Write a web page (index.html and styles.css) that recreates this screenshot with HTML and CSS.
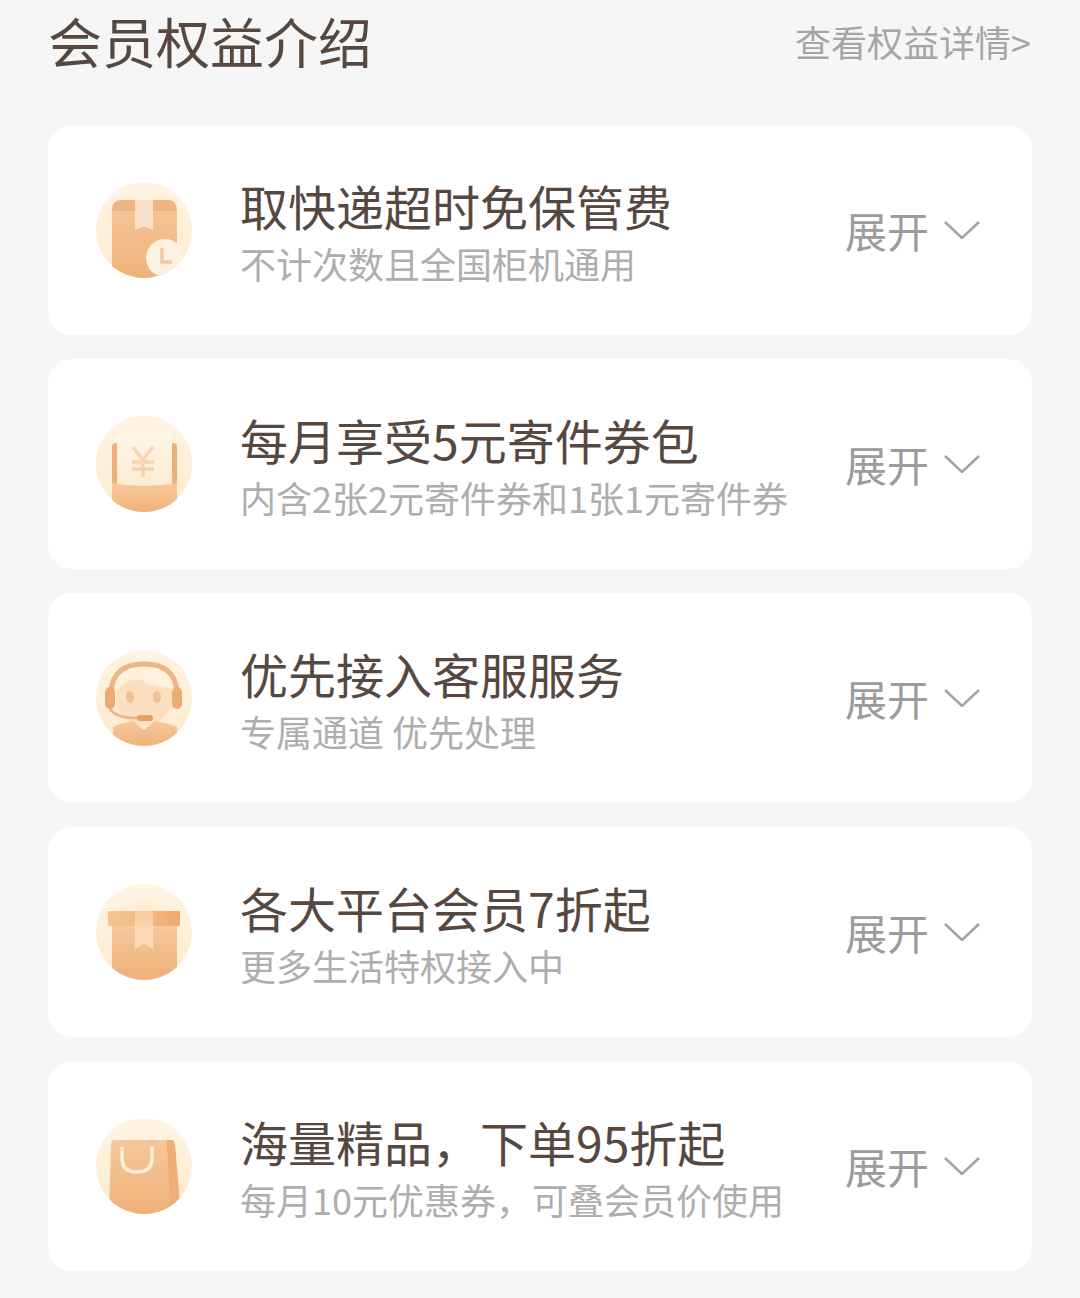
FILE: index.html
```html
<!DOCTYPE html>
<html lang="zh-CN">
<head>
  <meta charset="UTF-8">
  <meta name="viewport" content="width=device-width, initial-scale=1.0">
  <title>会员权益介绍</title>
  <link rel="stylesheet" href="styles.css">
</head>
<body>

<header class="page-head">
  <h1>会员权益介绍</h1>
  <a class="more">查看权益详情&gt;</a>
</header>

<svg class="defs" width="0" height="0">
  <defs>
    <linearGradient id="disc" x1="0" y1="0" x2="0" y2="1">
      <stop offset="0" stop-color="#fff4e3"/>
      <stop offset="1" stop-color="#fdeacd"/>
    </linearGradient>
    <linearGradient id="box" x1="0" y1="0" x2="0" y2="1">
      <stop offset="0" stop-color="#f6c89b"/>
      <stop offset="1" stop-color="#efb078"/>
    </linearGradient>
    <linearGradient id="band" x1="0" y1="0" x2="1" y2="0">
      <stop offset="0" stop-color="#f6c591"/>
      <stop offset="1" stop-color="#eeab6e"/>
    </linearGradient>
    <linearGradient id="sheet" x1="0" y1="0" x2="0" y2="1">
      <stop offset="0" stop-color="#fff6e9"/>
      <stop offset="1" stop-color="#fcebd2"/>
    </linearGradient>
    <linearGradient id="pale" x1="0" y1="0" x2="0" y2="1">
      <stop offset="0" stop-color="#fde3c4" stop-opacity=".35"/>
      <stop offset="1" stop-color="#fcdcb9"/>
    </linearGradient>
    <clipPath id="round"><circle cx="48" cy="48" r="48"/></clipPath>
  </defs>
</svg>

<main class="list">

  <!-- 取快递 -->
  <section class="card">
    <svg class="badge" viewBox="0 0 96 96">
      <circle cx="48" cy="48" r="48" fill="url(#disc)"/>
      <g clip-path="url(#round)">
        <path d="M16 30 Q16 18 26 18 H71 Q81 18 81 30 V100 H16 Z" fill="url(#box)"/>
        <path d="M16 29 Q16 18 26 18 H71 Q81 18 81 29 Z" fill="#f1b480"/>
        <path d="M39 18 H57 V48 L48 44 L39 48 Z" fill="#fbe3c9"/>
        <circle cx="69" cy="76" r="19" fill="#fdf1e0"/>
        <path d="M66 66 V80 H76" fill="none" stroke="#f3c9a0" stroke-width="3.5"/>
      </g>
    </svg>
    <div class="info">
      <h2>取快递超时免保管费</h2>
      <p>不计次数且全国柜机通用</p>
    </div>
    <div class="toggle">
      <span>展开</span>
      <svg class="chevron" viewBox="0 0 36 18"><path d="M1 1 L18 17 L35 1"/></svg>
    </div>
  </section>

  <!-- 寄件券 -->
  <section class="card">
    <svg class="badge" viewBox="0 0 96 96">
      <circle cx="48" cy="48" r="48" fill="url(#disc)"/>
      <g clip-path="url(#round)">
        <path d="M16 30 Q16 27 21 27 V70 H16 Z M81 30 Q81 27 76 27 V70 H81 Z" fill="#edb07a"/>
        <rect x="21" y="17" width="55" height="54" fill="url(#sheet)"/>
        <path d="M16 67 Q48 73 81 67 V100 H16 Z" fill="url(#box)"/>
        <path d="M37 31 L47 44 L57 31 M36 46 H58 M36 53 H58 M47 44 V61" fill="none" stroke="#f8d3ab" stroke-width="3.5"/>
      </g>
    </svg>
    <div class="info">
      <h2>每月享受5元寄件券包</h2>
      <p>内含2张2元寄件券和1张1元寄件券</p>
    </div>
    <div class="toggle">
      <span>展开</span>
      <svg class="chevron" viewBox="0 0 36 18"><path d="M1 1 L18 17 L35 1"/></svg>
    </div>
  </section>

  <!-- 客服 -->
  <section class="card">
    <svg class="badge" viewBox="0 0 96 96">
      <circle cx="48" cy="48" r="48" fill="url(#disc)"/>
      <g clip-path="url(#round)">
        <path d="M20 46 Q24 28 46 30 Q52 36 76 38 V52 Q70 74 48 76 Q26 74 20 52 Z" fill="#fcdfc0"/>
        <path d="M17 77 Q26 73 37 71 L48 80 L59 71 Q70 73 81 77 L81 100 H17 Z" fill="url(#box)"/>
        <path d="M15 42 Q17 14 48 14 Q79 14 81 42" fill="none" stroke="#efb482" stroke-width="5"/>
        <rect x="9" y="37" width="10" height="22" rx="5" fill="#edab72"/>
        <rect x="76" y="37" width="10" height="22" rx="5" fill="#edab72"/>
        <path d="M14 58 Q18 68 42 68" fill="none" stroke="#efb482" stroke-width="3"/>
        <rect x="41" y="65" width="16" height="6" rx="3" fill="#ea9f62"/>
        <ellipse cx="34" cy="47" rx="4" ry="6" fill="#f3c092"/>
        <ellipse cx="61" cy="47" rx="4" ry="6" fill="#f3c092"/>
      </g>
    </svg>
    <div class="info">
      <h2>优先接入客服服务</h2>
      <p>专属通道 优先处理</p>
    </div>
    <div class="toggle">
      <span>展开</span>
      <svg class="chevron" viewBox="0 0 36 18"><path d="M1 1 L18 17 L35 1"/></svg>
    </div>
  </section>

  <!-- 平台会员 -->
  <section class="card">
    <svg class="badge" viewBox="0 0 96 96">
      <circle cx="48" cy="48" r="48" fill="url(#disc)"/>
      <g clip-path="url(#round)">
        <rect x="16" y="42" width="65" height="56" fill="url(#box)"/>
        <rect x="12" y="27" width="72" height="15" rx="1" fill="url(#band)"/>
        <path d="M39 18 H57 V65 L48 60 L39 65 Z" fill="url(#pale)"/>
      </g>
    </svg>
    <div class="info">
      <h2>各大平台会员7折起</h2>
      <p>更多生活特权接入中</p>
    </div>
    <div class="toggle">
      <span>展开</span>
      <svg class="chevron" viewBox="0 0 36 18"><path d="M1 1 L18 17 L35 1"/></svg>
    </div>
  </section>

  <!-- 精品 -->
  <section class="card">
    <svg class="badge" viewBox="0 0 96 96">
      <circle cx="48" cy="48" r="48" fill="url(#disc)"/>
      <g clip-path="url(#round)">
        <path d="M69 22 H76 Q78 22 79 26 L85 98 H60 Z" fill="#efae76"/>
        <path d="M15 26 Q15 22 19 22 H69 Q71 22 71 26 L75 98 H13 Z" fill="url(#box)"/>
        <path d="M26 29 V40 Q26 54 41 54 Q56 54 56 40 V29" fill="none" stroke="#fdeed9" stroke-width="3.5"/>
      </g>
    </svg>
    <div class="info">
      <h2>海量精品，下单95折起</h2>
      <p>每月10元优惠券，可叠会员价使用</p>
    </div>
    <div class="toggle">
      <span>展开</span>
      <svg class="chevron" viewBox="0 0 36 18"><path d="M1 1 L18 17 L35 1"/></svg>
    </div>
  </section>

</main>

</body>
</html>
```

FILE: styles.css
```css
body {
  margin: 0;
  padding: 0 48px;
  background: #f6f6f6;
  font-family: "Noto Sans CJK SC", "Noto Sans", sans-serif;
}

.defs {
  position: absolute;
}

.page-head {
  display: flex;
  justify-content: space-between;
  align-items: center;
  height: 81px;
  margin-bottom: 44px;
}

.page-head h1 {
  margin: 0;
  font-size: 54px;
  font-weight: 400;
  color: #57483f;
}

.more {
  margin-right: 1px;
  font-size: 36px;
  color: #a6a6a6;
}

.list {
  display: flex;
  flex-direction: column;
  gap: 24px;
}

.card {
  display: flex;
  align-items: center;
  height: 210px;
  padding: 0 52px 0 48px;
  background: #ffffff;
  border-radius: 24px;
}

.badge {
  flex: none;
  width: 96px;
  height: 96px;
  filter: blur(0.5px);
}

.info {
  flex: 1;
  margin-left: 48px;
  padding-top: 8px;
}

.info h2 {
  margin: 0;
  font-size: 48px;
  line-height: 56px;
  font-weight: 400;
  color: #57483f;
}

.info p {
  margin: 2px 0 0;
  font-size: 36px;
  line-height: 56px;
  color: #aeaeae;
}

.toggle {
  display: flex;
  align-items: center;
  gap: 15px;
  color: #9c9c9c;
  font-size: 42px;
  line-height: 48px;
}

.chevron {
  width: 36px;
  height: 18px;
  fill: none;
  stroke: #a3a3a3;
  stroke-width: 2.5;
}
```
